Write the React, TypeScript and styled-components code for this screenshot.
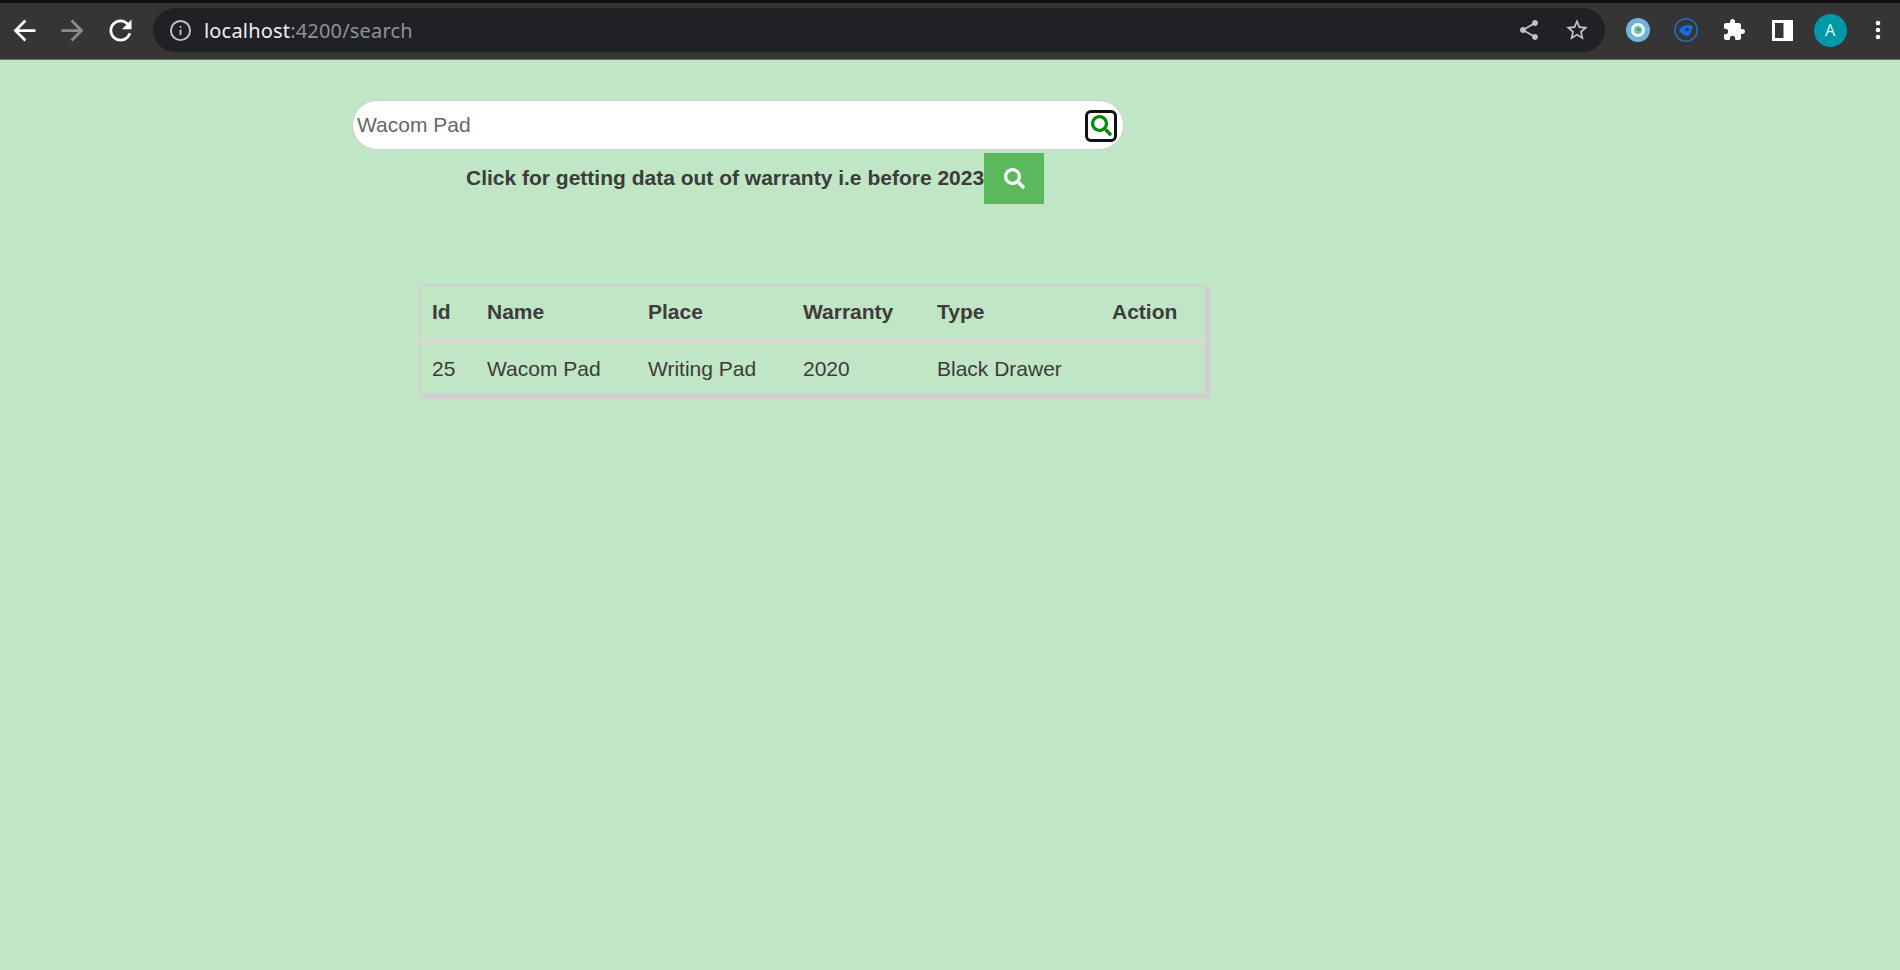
import React from 'react';
import styled, { createGlobalStyle } from 'styled-components';
import { Info, MoreVertical } from 'lucide-react';
import { FaSearch } from 'react-icons/fa';

const GlobalStyle = createGlobalStyle`
  html, body {
    margin: 0;
    padding: 0;
    height: 100%;
    background: #c1e6c5;
  }
  body {
    font-family: "Liberation Sans", Arial, sans-serif;
    color: #3c3c3c;
    overflow: hidden;
  }
`;

const Page = styled.div`
  width: 1900px;
  height: 970px;
  overflow: hidden;
  display: flex;
  flex-direction: column;
  background: #c1e6c5;
`;

// 브라우저 상단 바.
const BrowserBar = styled.header`
  height: 54px;
  padding-bottom: 2px;
  border-top: 3px solid #111;
  border-bottom: 1px solid #6e6e6e;
  background: #353535;
  display: flex;
  align-items: center;
  flex-shrink: 0;
`;

const NavGroup = styled.div`
  display: flex;
  align-items: center;
  width: 153px;
  flex-shrink: 0;
`;

const NavButton = styled.span<{ $dim?: boolean }>`
  width: 48px;
  height: 33px;
  display: flex;
  align-items: center;
  justify-content: center;
  color: ${(p) => (p.$dim ? '#8c8c8c' : '#fff')};
`;

const AddressBar = styled.div`
  width: 1452px;
  height: 44px;
  flex-shrink: 0;
  border-radius: 22px;
  background: #202124;
  display: flex;
  align-items: center;
  padding: 0 15px 0 16px;
  box-sizing: border-box;
  color: #c2c2c2;
`;

const UrlText = styled.span`
  margin-left: 12px;
  font-family: "Noto Sans", sans-serif;
  font-size: 20px;
  letter-spacing: 0.18px;
  color: #8f9296;
`;

const UrlHost = styled.span`
  color: #eef0f2;
`;

const AddressEnd = styled.div`
  margin-left: auto;
  display: flex;
  align-items: center;
  gap: 23px;
`;

const Extensions = styled.div`
  display: flex;
  align-items: center;
  padding-left: 9px;
`;

const ExtSlot = styled.span`
  width: 48px;
  height: 34px;
  flex-shrink: 0;
  display: flex;
  align-items: center;
  justify-content: center;
  color: #fff;
`;

const Avatar = styled.span`
  width: 33px;
  height: 33px;
  border-radius: 50%;
  background: #0097a7;
  color: #dff3f5;
  display: flex;
  align-items: center;
  justify-content: center;
  font-size: 16px;
  font-family: "Noto Sans", sans-serif;
`;

const Content = styled.main`
  padding: 40px 0 0 352px;
`;

const SearchBox = styled.div`
  width: 772px;
  height: 50px;
  box-sizing: border-box;
  border: 1px solid #cfcfcf;
  border-radius: 25px;
  background: #fff;
  display: flex;
  align-items: center;
  padding: 0 6px 0 4px;
`;

const SearchInput = styled.input`
  flex: 1;
  border: none;
  outline: none;
  background: transparent;
  padding: 0;
  font-family: "Liberation Sans", Arial, sans-serif;
  font-size: 21px;
  color: #666;
`;

const SearchIconButton = styled.button`
  width: 32px;
  height: 32px;
  margin-top: 1px;
  padding: 0;
  box-sizing: border-box;
  border: 3px solid #111;
  border-radius: 6px;
  background: #fff;
  color: #0a8a0a;
  display: flex;
  align-items: center;
  justify-content: center;
`;

const WarrantyRow = styled.div`
  width: 772px;
  margin-top: 3px;
  padding-left: 114px;
  box-sizing: border-box;
  display: flex;
  align-items: center;
`;

const WarrantyLabel = styled.span`
  padding-bottom: 2px;
  font-size: 21px;
  font-weight: 700;
  white-space: nowrap;
`;

const GreenButton = styled.button`
  width: 60px;
  height: 51px;
  padding: 0;
  border: 1px solid #58b458;
  background: #5cb85c;
  color: #fff;
  display: flex;
  align-items: center;
  justify-content: center;
`;

const Table = styled.table`
  margin: 80px 0 0 67px;
  width: 785px;
  table-layout: fixed;
  border-collapse: collapse;
  border: 2px solid #d0d0d0;
  box-shadow: 4px 4px 0 #cfcfcf;
  font-size: 21px;
`;

const HeadCell = styled.th<{ $w: number }>`
  width: ${(p) => p.$w}px;
  height: 56px;
  padding: 0 0 2px 11px;
  text-align: left;
  font-weight: 700;
  border-bottom: 4px solid #d9d9d9;
  box-sizing: border-box;
`;

const Cell = styled.td`
  height: 53px;
  padding: 1px 0 0 11px;
  box-sizing: border-box;
`;

const columns = [
  { label: 'Id', w: 56 },
  { label: 'Name', w: 161 },
  { label: 'Place', w: 155 },
  { label: 'Warranty', w: 134 },
  { label: 'Type', w: 175 },
  { label: 'Action', w: 104 },
];

const row = ['25', 'Wacom Pad', 'Writing Pad', '2020', 'Black Drawer', ''];

const GlyphIcon = ({ d, size, fill }: { d: string; size: number; fill?: string }) => (
  <svg width={size} height={size} viewBox="0 0 24 24" fill={fill || 'currentColor'}>
    <path d={d} />
  </svg>
);

const ICON_BACK = 'M20 11H7.83l5.59-5.59L12 4l-8 8 8 8 1.41-1.41L7.83 13H20v-2z';
const ICON_FORWARD = 'M4 11h12.17l-5.59-5.59L12 4l8 8-8 8-1.41-1.41L16.17 13H4v-2z';
const ICON_RELOAD = 'M17.65 6.35C16.2 4.9 14.21 4 12 4c-4.42 0-7.99 3.58-7.99 8s3.57 8 7.99 8c3.73 0 6.84-2.55 7.73-6h-2.08c-.82 2.33-3.04 4-5.65 4-3.31 0-6-2.69-6-6s2.69-6 6-6c1.66 0 3.14.69 4.22 1.78L13 11h7V4l-2.35 2.35z';
const ICON_SHARE = 'M18 16.08c-.76 0-1.44.3-1.96.77L8.91 12.7c.05-.23.09-.46.09-.7s-.04-.47-.09-.7l7.05-4.11c.54.5 1.25.81 2.04.81 1.66 0 3-1.34 3-3s-1.34-3-3-3-3 1.34-3 3c0 .24.04.47.09.7L8.04 9.81C7.5 9.31 6.79 9 6 9c-1.66 0-3 1.34-3 3s1.34 3 3 3c.79 0 1.5-.31 2.04-.81l7.12 4.16c-.05.21-.08.43-.08.65 0 1.61 1.31 2.92 2.92 2.92s2.92-1.31 2.92-2.92-1.31-2.92-2.92-2.92z';
const ICON_STAR = 'M22 9.24l-7.19-.62L12 2 9.19 8.63 2 9.24l5.46 4.73L5.82 21 12 17.27 18.18 21l-1.63-7.03L22 9.24zM12 15.4l-3.76 2.27 1-4.28-3.32-2.88 4.38-.38L12 6.1l1.71 4.04 4.38.38-3.32 2.88 1 4.28L12 15.4z';
const ICON_PUZZLE = 'M20.5 11H19V7c0-1.1-.9-2-2-2h-4V3.5C13 2.12 11.88 1 10.5 1S8 2.12 8 3.5V5H4c-1.1 0-1.99.9-1.99 2v3.8H3.5c1.49 0 2.7 1.21 2.7 2.7s-1.21 2.7-2.7 2.7H2V20c0 1.1.9 2 2 2h3.8v-1.5c0-1.49 1.21-2.7 2.7-2.7 1.49 0 2.7 1.21 2.7 2.7V22H17c1.1 0 2-.9 2-2v-4h1.5c1.38 0 2.5-1.12 2.5-2.5S21.88 11 20.5 11z';

const ExtOne = () => (
  <svg width="24" height="24" viewBox="0 0 24 24">
    <circle cx="12" cy="12" r="12" fill="#72b4dc" />
    <circle cx="12" cy="12" r="7" fill="#f0f6f4" />
    <circle cx="12" cy="12" r="4" fill="#72c4aa" />
    <path d="M12 9.500V12h2.500" stroke="#2f6f6a" strokeWidth="1" fill="none" />
  </svg>
);

const ExtTwo = () => (
  <svg width="24" height="24" viewBox="0 0 24 24">
    <circle cx="12" cy="12" r="11.200" fill="none" stroke="#2a6cc0" strokeWidth="1.500" />
    <path d="M5 12C7.500 7.500 14 6 18 7.500c.8 5-1.800 10.200-5 10.500C10 18.200 7 15 5 12z" fill="#1a6fe0" />
    <circle cx="13" cy="11.500" r="2" fill="#123a78" />
  </svg>
);

const SidePanelIcon = () => (
  <svg width="21" height="21" viewBox="0 0 21 21">
    <path d="M0 0h21v21H0z" fill="#fff" />
    <path d="M3 3h8.500v15H3z" fill="#353535" />
  </svg>
);

export default function App() {
  return (
    <Page>
      <GlobalStyle />
      <BrowserBar>
        <NavGroup>
          <NavButton><GlyphIcon d={ICON_BACK} size={33} /></NavButton>
          <NavButton $dim><GlyphIcon d={ICON_FORWARD} size={33} /></NavButton>
          <NavButton><GlyphIcon d={ICON_RELOAD} size={33} /></NavButton>
        </NavGroup>
        <AddressBar>
          <Info size={23} />
          <UrlText><UrlHost>localhost</UrlHost>:4200/search</UrlText>
          <AddressEnd>
            <GlyphIcon d={ICON_SHARE} size={24} />
            <GlyphIcon d={ICON_STAR} size={26} />
          </AddressEnd>
        </AddressBar>
        <Extensions>
          <ExtSlot><ExtOne /></ExtSlot>
          <ExtSlot><ExtTwo /></ExtSlot>
          <ExtSlot><GlyphIcon d={ICON_PUZZLE} size={24} /></ExtSlot>
          <ExtSlot><SidePanelIcon /></ExtSlot>
          <ExtSlot><Avatar>A</Avatar></ExtSlot>
          <ExtSlot><MoreVertical size={24} strokeWidth={2.6} /></ExtSlot>
        </Extensions>
      </BrowserBar>
      <Content>
        <SearchBox>
          <SearchInput defaultValue="Wacom Pad" />
          <SearchIconButton><FaSearch size={21} /></SearchIconButton>
        </SearchBox>
        <WarrantyRow>
          <WarrantyLabel>Click for getting data out of warranty i.e before 2023</WarrantyLabel>
          <GreenButton><FaSearch size={21} /></GreenButton>
        </WarrantyRow>
        <Table>
          <thead>
            <tr>
              {columns.map((c) => (
                <HeadCell key={c.label} $w={c.w}>{c.label}</HeadCell>
              ))}
            </tr>
          </thead>
          <tbody>
            <tr>
              {row.map((value, i) => (
                <Cell key={i}>{value}</Cell>
              ))}
            </tr>
          </tbody>
        </Table>
      </Content>
    </Page>
  );
}
